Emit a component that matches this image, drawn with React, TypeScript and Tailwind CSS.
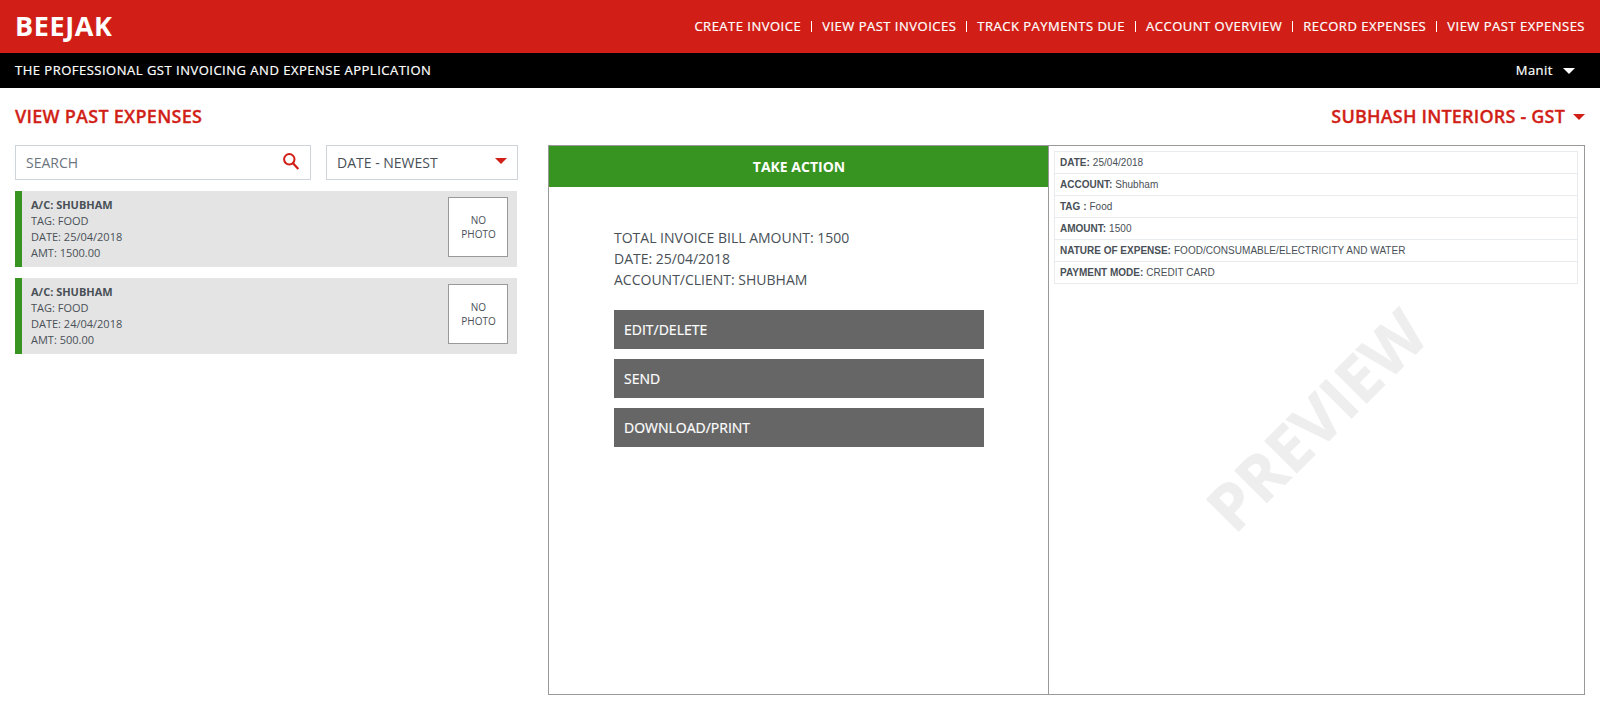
import React from "react";

const navItems = [
  "CREATE INVOICE",
  "VIEW PAST INVOICES",
  "TRACK PAYMENTS DUE",
  "ACCOUNT OVERVIEW",
  "RECORD EXPENSES",
  "VIEW PAST EXPENSES",
];

const expenses = [
  { account: "SHUBHAM", tag: "FOOD", date: "25/04/2018", amount: "1500.00" },
  { account: "SHUBHAM", tag: "FOOD", date: "24/04/2018", amount: "500.00" },
];

const actions = ["EDIT/DELETE", "SEND", "DOWNLOAD/PRINT"];

const details = [
  ["DATE:", "25/04/2018"],
  ["ACCOUNT:", "Shubham"],
  ["TAG :", "Food"],
  ["AMOUNT:", "1500"],
  ["NATURE OF EXPENSE:", "FOOD/CONSUMABLE/ELECTRICITY AND WATER"],
  ["PAYMENT MODE:", "CREDIT CARD"],
];

function Caret({ className = "" }: { className?: string }) {
  return (
    <svg className={className} width="12" height="6" viewBox="0 0 12 6" fill="currentColor">
      <path d="M0 0H12L6 6Z" />
    </svg>
  );
}

function SearchIcon() {
  return (
    <svg width="17" height="17" viewBox="0 0 17 17" fill="none" stroke="#d11f18">
      <circle cx="6.3" cy="6.3" r="5.2" strokeWidth="2" />
      <path d="M9.8 10L15.3 16" strokeWidth="2.2" />
    </svg>
  );
}

export default function App() {
  return (
    <div className="h-[720px] w-[1600px] overflow-hidden bg-white font-['Open_Sans',sans-serif] text-[#495057]">
      <header className="flex h-[53px] items-center justify-between bg-[#d11f18] px-[15px] text-white">
        <h1 className="pb-[2px] text-[27px] leading-[51px] font-bold tracking-[0.6px]">BEEJAK</h1>
        <nav className="flex items-center text-[13px] tracking-[0.5px] [-webkit-text-stroke:0.2px]">
          {navItems.map((item, i) => (
            <React.Fragment key={item}>
              {i > 0 && <span className="mr-[10px] ml-[10px] h-[11px] w-px bg-white" />}
              <a className="whitespace-nowrap">{item}</a>
            </React.Fragment>
          ))}
        </nav>
      </header>

      <div className="flex h-[35px] items-center justify-between bg-black pr-[25px] pl-[15px] text-[13px] text-white [-webkit-text-stroke:0.2px]">
        <p className="tracking-[0.5px]">THE PROFESSIONAL GST INVOICING AND EXPENSE APPLICATION</p>
        <div className="flex items-center gap-[10px] tracking-[0.5px]">
          <span>Manit</span>
          <Caret />
        </div>
      </div>

      <div className="flex h-[57px] items-center justify-between px-[15px] text-[18px] font-semibold text-[#d11f18] [-webkit-text-stroke:0.3px]">
        <h2 className="tracking-[0.26px]">VIEW PAST EXPENSES</h2>
        <div className="flex items-center gap-[8px]">
          <span className="tracking-[0.19px]">SUBHASH INTERIORS - GST</span>
          <Caret />
        </div>
      </div>

      <main className="flex pl-[15px]">
        <section className="w-[503px]">
          <div className="flex gap-[15px]">
            <div className="flex h-[35px] w-[296px] justify-between border border-[#ced4da] pr-[10px] pl-[10px] text-[14px]">
              <span className="leading-[34px] text-[#6c757d]">SEARCH</span>
              <span className="pt-[7px]">
                <SearchIcon />
              </span>
            </div>
            <div className="flex h-[35px] w-[192px] justify-between border border-[#ced4da] px-[10px] text-[14px]">
              <span className="leading-[34px]">DATE - NEWEST</span>
              <Caret className="mt-3 text-[#d11f18]" />
            </div>
          </div>
          {expenses.map((e) => (
            <article
              key={e.date}
              className="mt-[11px] flex h-[76px] w-[502px] justify-between border-l-[7px] border-[#379421] bg-[#e4e4e4] pt-[6px] pr-[9px] pl-[9px]"
            >
              <div className="text-[11px] leading-[16px]">
                <p className="font-bold">A/C: {e.account}</p>
                <p>TAG: {e.tag}</p>
                <p>DATE: {e.date}</p>
                <p>AMT: {e.amount}</p>
              </div>
              <div className="flex size-[60px] flex-col items-center justify-center border border-[#999] bg-white pl-px text-[10px] leading-[14px]">
                <span>NO</span>
                <span>PHOTO</span>
              </div>
            </article>
          ))}
        </section>

        <section className="ml-[30px] flex h-[550px] w-[1037px] border border-[#999]">
          <div className="w-[499px]">
            <h3 className="h-[41px] bg-[#379421] pl-px text-center text-[14px] leading-[41px] font-bold text-white">TAKE ACTION</h3>
            <div className="pt-[40px] pl-[65px] text-[14px] leading-[21px]">
              <p>TOTAL INVOICE BILL AMOUNT: 1500</p>
              <p>DATE: 25/04/2018</p>
              <p>ACCOUNT/CLIENT: SHUBHAM</p>
              <div className="mt-[20px] flex w-[370px] flex-col gap-[10px]">
                {actions.map((a) => (
                  <button key={a} className="h-[39px] bg-[#666] pl-[10px] text-left text-white [-webkit-text-stroke:0.2px]">
                    {a}
                  </button>
                ))}
              </div>
            </div>
          </div>
          <div className="relative flex-1 border-l border-[#999] p-[5px] pr-[6px]">
            <dl className="border border-[#e9ecef] font-['Liberation_Sans',sans-serif] text-[10px] leading-[21px]">
              {details.map(([k, v]) => (
                <div key={k} className="flex h-[22px] gap-[3px] border-b border-[#e9ecef] pl-[5px] last:h-[21px] last:border-b-0">
                  <dt className="font-bold">{k}</dt>
                  <dd className="tracking-[0.03px]">{v}</dd>
                </div>
              ))}
            </dl>
            <span className="absolute top-[274px] left-[267px] -translate-x-1/2 -translate-y-1/2 -rotate-45 text-[64px] leading-none font-bold text-[#eee] [-webkit-text-stroke:0.5px_#eee]">
              PREVIEW
            </span>
          </div>
        </section>
      </main>
    </div>
  );
}
